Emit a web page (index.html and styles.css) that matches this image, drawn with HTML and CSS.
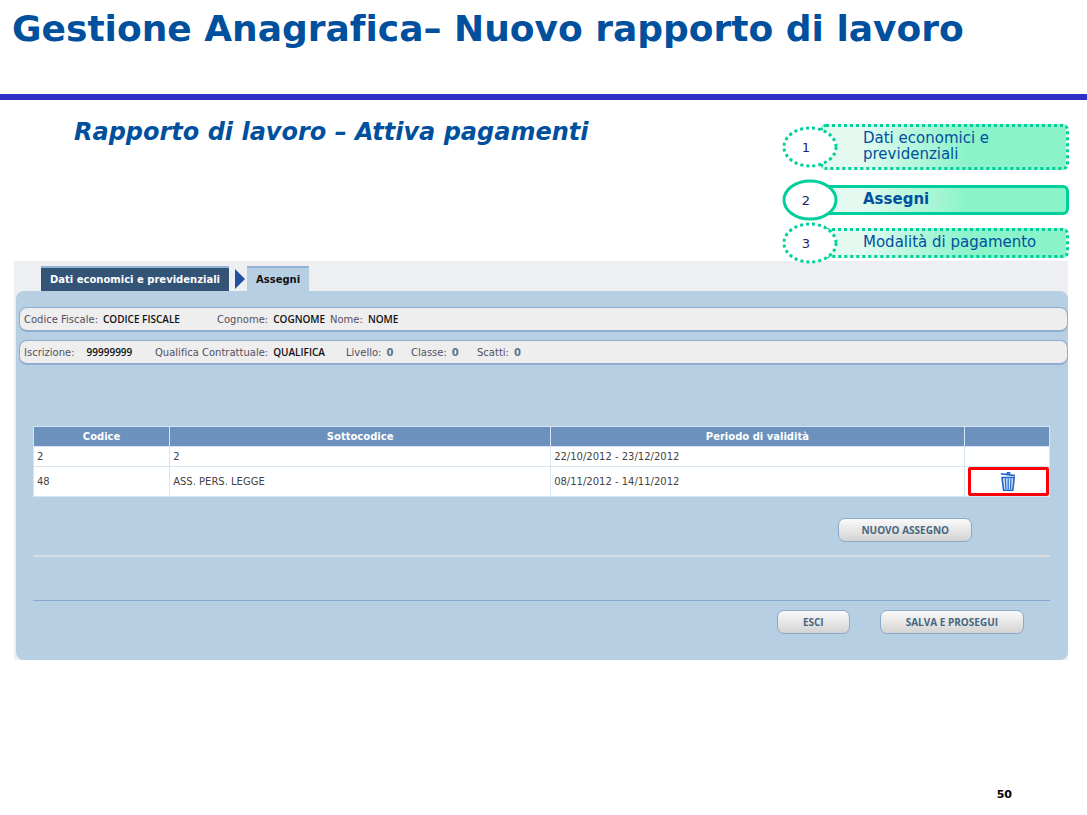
FILE: index.html
```html
<!DOCTYPE html>
<html lang="it">
<head>
<meta charset="utf-8">
<title>Gestione Anagrafica – Nuovo rapporto di lavoro</title>
<link rel="stylesheet" href="styles.css">
</head>
<body>
<header class="page-header">
  <h1 class="page-title">Gestione Anagrafica– Nuovo rapporto di lavoro</h1>
</header>
<section class="intro">
  <h2 class="subtitle">Rapporto di lavoro – Attiva pagamenti</h2>
  <ol class="steps">
    <li class="step step-tall">
      <span class="step-number"><svg class="step-ring" viewBox="0 0 56 42" aria-hidden="true"><ellipse class="ring dotted" cx="28" cy="21" rx="26" ry="19"/></svg><span class="digit">1</span></span>
      <span class="step-label">Dati economici e previdenziali</span>
    </li>
    <li class="step step-current">
      <span class="step-number"><svg class="step-ring" viewBox="0 0 56 42" aria-hidden="true"><ellipse class="ring" cx="28" cy="21" rx="26" ry="19"/></svg><span class="digit">2</span></span>
      <span class="step-label">Assegni</span>
    </li>
    <li class="step">
      <span class="step-number"><svg class="step-ring" viewBox="0 0 56 42" aria-hidden="true"><ellipse class="ring dotted" cx="28" cy="21" rx="26" ry="19"/></svg><span class="digit">3</span></span>
      <span class="step-label">Modalità di pagamento</span>
    </li>
  </ol>
</section>
<main class="app">
  <nav class="tabs">
    <a class="tab" href="#dati">Dati economici e previdenziali</a>
    <svg class="tab-arrow" viewBox="0 0 10 20" aria-hidden="true"><path d="M0 0L10 10L0 20Z"/></svg>
    <a class="tab tab-active" href="#assegni" aria-current="page">Assegni</a>
  </nav>
  <div class="panel" id="assegni">
    <dl class="info info-person">
      <div class="field"><dt>Codice Fiscale:</dt><dd>CODICE FISCALE</dd></div>
      <div class="field"><dt>Cognome:</dt><dd>COGNOME</dd></div>
      <div class="field"><dt>Nome:</dt><dd>NOME</dd></div>
    </dl>
    <dl class="info info-contract">
      <div class="field wide"><dt>Iscrizione:</dt><dd>99999999</dd></div>
      <div class="field"><dt>Qualifica Contrattuale:</dt><dd>QUALIFICA</dd></div>
      <div class="field"><dt>Livello:</dt><dd class="count">0</dd></div>
      <div class="field"><dt>Classe:</dt><dd class="count">0</dd></div>
      <div class="field"><dt>Scatti:</dt><dd class="count">0</dd></div>
    </dl>
    <div class="content">
      <table class="grid">
        <colgroup><col class="col-code"><col class="col-sub"><col class="col-period"><col class="col-action"></colgroup>
        <thead>
          <tr><th scope="col">Codice</th><th scope="col">Sottocodice</th><th scope="col">Periodo di validità</th><th></th></tr>
        </thead>
        <tbody>
          <tr><td>2</td><td>2</td><td>22/10/2012 - 23/12/2012</td><td></td></tr>
          <tr class="tall"><td>48</td><td>ASS. PERS. LEGGE</td><td>08/11/2012 - 14/11/2012</td>
            <td class="action"><button class="delete" type="button" aria-label="Elimina assegno"><svg class="trash" viewBox="0 0 16 20" aria-hidden="true"><path class="lid" d="M.8 1.8L15 3.6M7.2 2.2L7.5 .6L9.6 .9L9.4 2.6"/><path class="can" d="M2 5.5H14.2L12.8 18.2H3.6Z"/><path class="ribs" d="M5.4 6.5L5.9 17M8.2 6.5V17M11 6.5L10.5 17"/></svg></button></td></tr>
        </tbody>
      </table>
      <div class="row-actions"><button class="btn btn-compact" type="button">NUOVO ASSEGNO</button></div>
      <hr class="rule">
      <hr class="rule-dotted">
      <div class="form-actions">
        <button class="btn" type="button">ESCI</button>
        <button class="btn" type="button">SALVA E PROSEGUI</button>
      </div>
    </div>
  </div>
</main>
<footer class="page-number">50</footer>
</body>
</html>
```
FILE: styles.css
```css
* { box-sizing: border-box; }
body {
  margin: 0;
  background: #fff;
  font-family: "DejaVu Sans", sans-serif;
  font-variant-ligatures: none;
}
.page-header {
  padding: 6px 12px 42px;
  border-bottom: 6px solid #3030c8;
}
.page-title {
  margin: 0;
  color: #00509e;
  font-size: 36px;
  line-height: 46px;
}
.intro {
  display: flex;
  justify-content: space-between;
  padding: 16px 18px 0 74px;
  margin-bottom: -3px;
}
.subtitle {
  margin: 0;
  color: #00509e;
  font-size: 24px;
  font-style: italic;
  line-height: 32px;
}
.steps {
  flex: none;
  display: flex;
  flex-direction: column;
  gap: 1px;
  width: 287px;
  margin: 8px 0 0;
  padding: 0;
  list-style: none;
}
.step {
  display: flex;
  align-items: center;
}
.step-tall { margin-bottom: 8px; }
.step-number {
  position: relative;
  flex: none;
  display: grid;
  place-items: center;
  width: 56px;
  height: 42px;
}
.step-ring, .digit { grid-area: 1 / 1; }
.step-ring { width: 56px; height: 42px; }
.digit {
  padding-right: 8px;
  color: #27206a;
  font-size: 13px;
}
.ring { fill: #fff; stroke: #00cf9b; stroke-width: 3; }
.ring.dotted { stroke-dasharray: 3 3; }
.step-label {
  flex: 1;
  margin-left: -18px;
  padding: 3px 0 5px 40px;
  border: 3px dotted #00cf9b;
  border-radius: 6px;
  background: linear-gradient(90deg, #e4faf1 15%, #8af3c9 60%);
  color: #00509e;
  font-size: 15px;
  line-height: 16px;
}
.step-tall .step-label {
  min-height: 46px;
  padding-right: 60px;
}
.step-current .step-label {
  border-style: solid;
  font-size: 15px;
  font-weight: bold;
}
.app {
  margin: 0 19px 0 14px;
  background: #eeeff2;
}
.tabs {
  display: flex;
  align-items: center;
  padding: 5px 0 0 27px;
}
.tab {
  padding: 0 9px;
  border-top: 2px solid #93b3d6;
  background: #335377;
  color: #fff;
  font-size: 10px;
  font-weight: bold;
  line-height: 23px;
  text-decoration: none;
}
.tab-active {
  background: #b7cfe3;
  color: #111;
}
.tab-arrow {
  width: 10px;
  height: 20px;
  margin: 0 2px 0 6px;
  fill: #2450a4;
}
.panel {
  margin-left: 2px;
  padding: 16px 0 26px;
  border-radius: 8px;
  background: #b7cfe3;
}
.info {
  display: grid;
  align-items: center;
  height: 25px;
  margin: 0 0 8px 3px;
  padding-left: 4px;
  border: 1px solid #8eadd0;
  border-bottom-width: 2px;
  border-radius: 8px;
  background: #eee;
}
.info-person { grid-template-columns: 193px 113px auto; }
.info-contract { grid-template-columns: 131px 191px 65px 66px auto; }
.field {
  display: flex;
  align-items: center;
  gap: 5px;
  white-space: nowrap;
}
.field.wide { gap: 12px; }
.field dt { color: #554e60; font-size: 10px; }
.field dd {
  margin: 0;
  color: #111;
  font-family: "Open Sans", sans-serif;
  font-size: 10px;
  font-weight: 600;
}
.field .count {
  color: #5a7388;
  font-family: "DejaVu Sans", sans-serif;
  font-weight: bold;
}
.content { padding: 53px 18px 0 17px; }
.grid {
  width: 100%;
  border-collapse: collapse;
  table-layout: fixed;
  background: #fff;
  color: #444;
  font-size: 10px;
}
.col-code { width: 13.4%; }
.col-sub { width: 37.5%; }
.col-period { width: 40.7%; }
.grid th, .grid td {
  height: 20px;
  padding: 0 3px;
  border: 1px solid #d5e5f1;
  text-align: left;
}
.grid th {
  background: #6c91bc;
  color: #fff;
  text-align: center;
}
.grid .tall td { height: 30px; }
.grid .action { padding: 0 0 0 3px; }
.delete {
  display: grid;
  place-items: center;
  width: 100%;
  height: 29px;
  padding: 0;
  border: 3px solid #fb0007;
  border-radius: 2px;
  background: #fff;
}
.trash {
  width: 16px;
  height: 20px;
  fill: none;
  stroke: #1e66c8;
  stroke-width: 1.6;
}
.trash .can { fill: #d3e6fb; }
.trash .ribs { stroke-width: 1.2; }
.btn {
  height: 24px;
  padding: 0 25px;
  border: 1px solid #8aa9cb;
  border-radius: 7px;
  background: linear-gradient(#fafafa, #d3d3d3);
  color: #48677f;
  font-family: "Open Sans", sans-serif;
  font-size: 10px;
  font-weight: bold;
}
.btn-compact { padding: 0 22px; }
.row-actions {
  display: flex;
  justify-content: flex-end;
  padding: 21px 78px 13px 0;
}
.rule, .rule-dotted { margin: 0; border: 0; }
.rule { border-top: 2px solid #d9dde0; }
.rule-dotted {
  margin-top: 43px;
  border-top: 1px solid #86a6d4;
}
.form-actions {
  display: flex;
  justify-content: flex-end;
  gap: 30px;
  padding: 9px 26px 0 0;
}
.page-number {
  padding: 127px 75px 0 0;
  font-size: 11px;
  font-weight: bold;
  line-height: 16px;
  text-align: right;
}
```
